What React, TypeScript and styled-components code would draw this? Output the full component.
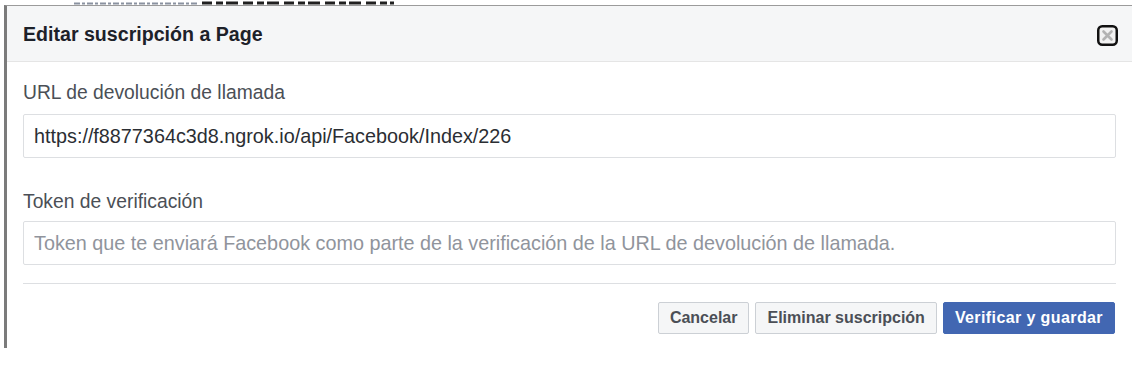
import React from "react";
import styled, { createGlobalStyle } from "styled-components";

const GlobalStyle = createGlobalStyle`
  html, body {
    margin: 0;
    padding: 0;
    background: #ffffff;
  }
  body {
    font-family: "Liberation Sans", Arial, Helvetica, sans-serif;
  }
  * {
    box-sizing: border-box;
  }
`;

const Page = styled.div`
  width: 1144px;
  height: 379px;
  background: #ffffff;
  overflow: hidden;
`;

// the page behind the dialog: only the bottom pixels of a line survive
const BackdropStrip = styled.div`
  height: 5px;
  display: flex;
  padding-left: 74px;
`;

const Dialog = styled.div`
  margin-left: 4px;
  width: 1128px;
  height: 343px;
  border-top: 1px solid #9b9b9b;
  border-left: 3px solid #7b7b7b;
  background: #ffffff;
  display: flex;
  flex-direction: column;
`;

const Header = styled.div`
  height: 56px;
  flex: none;
  display: flex;
  align-items: center;
  justify-content: space-between;
  padding: 0 14px 0 16px;
  background: #f5f6f7;
  border-bottom: 1px solid #e5e5e5;
`;

const Title = styled.h2`
  margin: 0;
  padding-top: 2px;
  font-size: 19.6px;
  font-weight: 700;
  color: #1d2129;
`;

const CloseButton = styled.button`
  width: 21px;
  height: 21px;
  margin-top: 3px;
  padding: 0;
  border: none;
  background: none;
  display: flex;
  cursor: pointer;
`;

const Body = styled.div`
  padding: 19px 16px 0 16px;
  display: flex;
  flex-direction: column;
`;

const Field = styled.div<{ $gap: number }>`
  display: flex;
  flex-direction: column;
  margin-bottom: ${({ $gap }) => $gap}px;
`;

const Label = styled.label<{ $space: number }>`
  font-size: 19.3px;
  line-height: 24px;
  color: #4b4f56;
  margin-bottom: ${({ $space }) => $space}px;
`;

const TextInput = styled.input`
  height: 44px;
  width: 100%;
  border: 1px solid #dddfe2;
  border-radius: 2px;
  padding: 0 10px;
  font-family: inherit;
  font-size: 19.8px;
  color: #2b2e33;
  background: #ffffff;
  outline: none;

  &::placeholder {
    color: #90949c;
  }
`;

const Divider = styled.div`
  height: 1px;
  background: #dddfe2;
`;

const Footer = styled.div`
  display: flex;
  justify-content: flex-end;
  gap: 6px;
  margin-top: 18px;
  padding-right: 1px;
`;

const Button = styled.button<{ $primary?: boolean }>`
  height: 32px;
  padding: 0 11px;
  border-radius: 2px;
  font-family: inherit;
  font-size: 16px;
  font-weight: 700;
  cursor: pointer;
  border: 1px solid ${({ $primary }) => ($primary ? "#4267b2" : "#ccd0d5")};
  background: ${({ $primary }) => ($primary ? "#4267b2" : "#f5f6f7")};
  color: ${({ $primary }) => ($primary ? "#ffffff" : "#4b4f56")};
  letter-spacing: ${({ $primary }) => ($primary ? "0.4px" : "0")};
`;

function BackdropLine() {
  return (
    <svg width="330" height="5" viewBox="0 0 330 5">
      <line x1="0" y1="3.5" x2="125" y2="3.5" stroke="#5a6478" strokeWidth="2" strokeDasharray="6 2 3 2" opacity="0.7" />
      <line x1="128" y1="3" x2="320" y2="3" stroke="#202020" strokeWidth="3" strokeDasharray="10 4 7 3 12 5" />
    </svg>
  );
}

function CloseIcon() {
  return (
    <svg width="21" height="21" viewBox="0 0 21 21">
      <rect x="1.25" y="1.25" width="18.5" height="18.5" rx="4" fill="#f2f2f2" stroke="#111111" strokeWidth="2.5" />
      <path d="M6.5 6.5 L14.5 14.5 M14.5 6.5 L6.5 14.5" stroke="#b3b3b3" strokeWidth="2.6" strokeLinecap="round" />
    </svg>
  );
}

export default function App() {
  return (
    <Page>
      <GlobalStyle />
      <BackdropStrip>
        <BackdropLine />
      </BackdropStrip>
      <Dialog>
        <Header>
          <Title>Editar suscripción a Page</Title>
          <CloseButton aria-label="Cerrar">
            <CloseIcon />
          </CloseButton>
        </Header>
        <Body>
          <Field $gap={32}>
            <Label $space={9}>URL de devolución de llamada</Label>
            <TextInput
              readOnly
              defaultValue="https://f8877364c3d8.ngrok.io/api/Facebook/Index/226"
            />
          </Field>
          <Field $gap={18}>
            <Label $space={7}>Token de verificación</Label>
            <TextInput placeholder="Token que te enviará Facebook como parte de la verificación de la URL de devolución de llamada." />
          </Field>
          <Divider />
          <Footer>
            <Button>Cancelar</Button>
            <Button>Eliminar suscripción</Button>
            <Button $primary>Verificar y guardar</Button>
          </Footer>
        </Body>
      </Dialog>
    </Page>
  );
}
